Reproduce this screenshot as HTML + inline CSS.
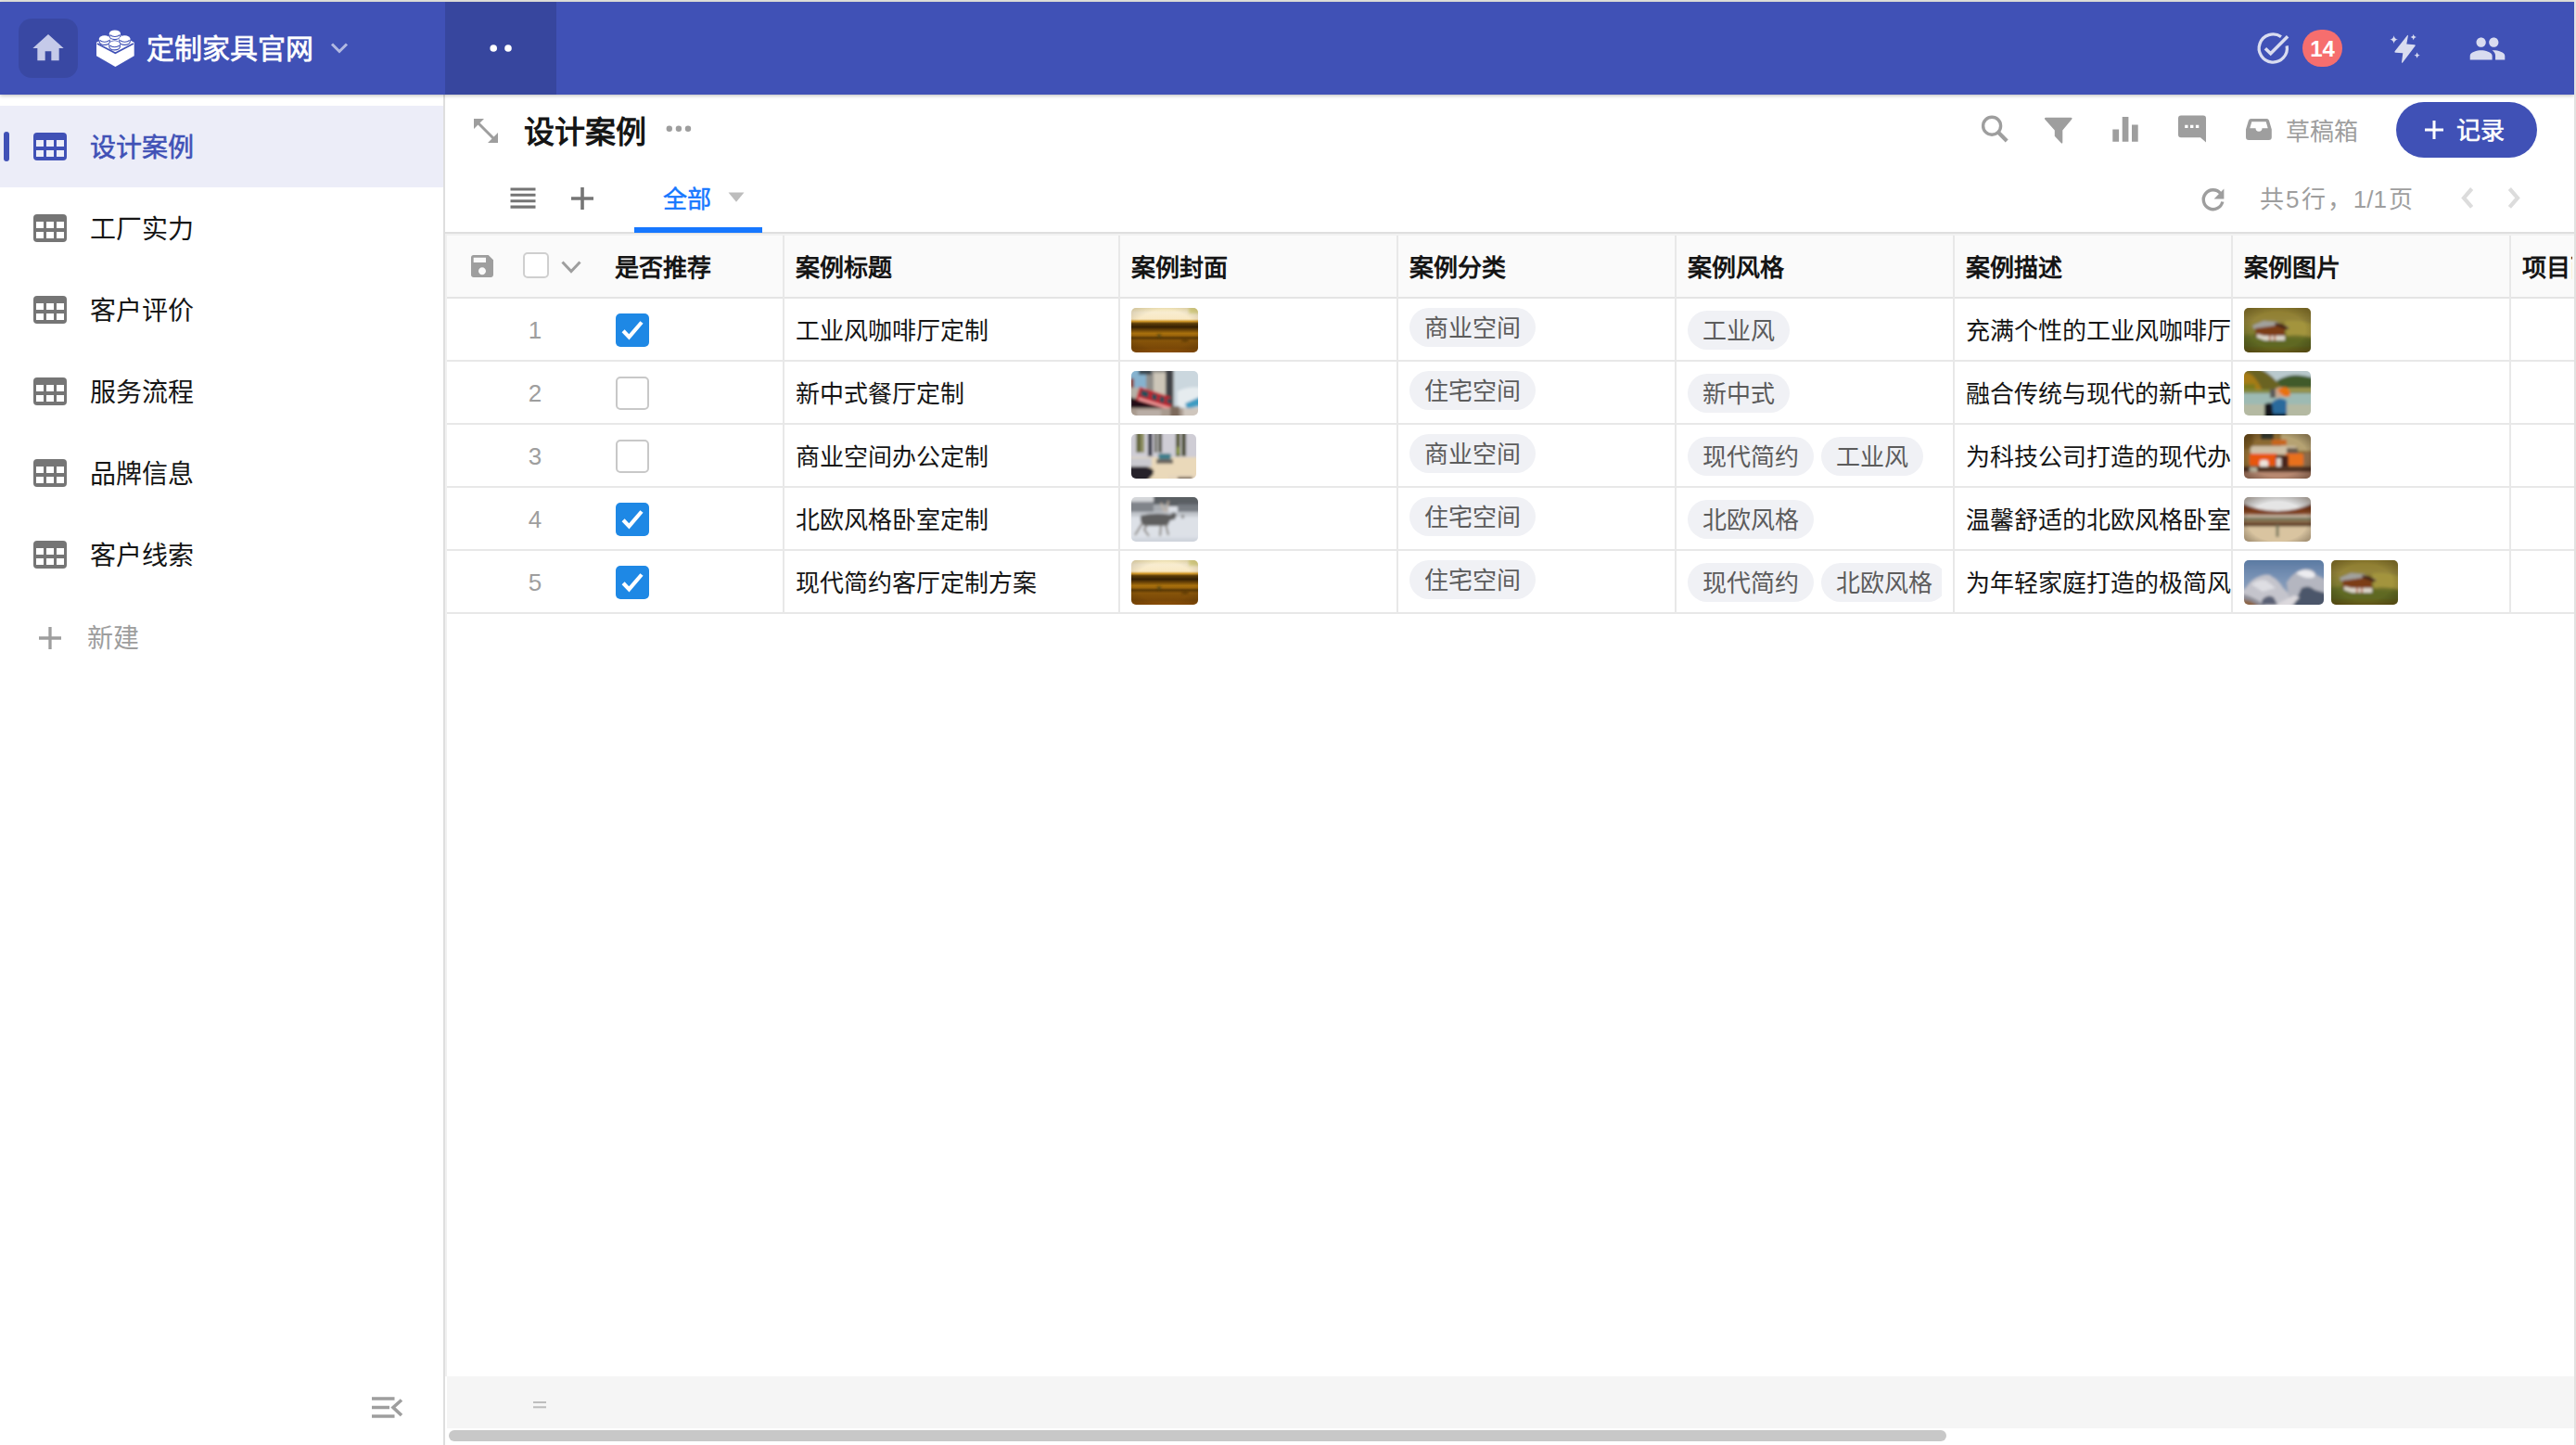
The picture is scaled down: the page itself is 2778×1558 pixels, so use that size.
<!DOCTYPE html>
<html lang="zh-CN">
<head>
<meta charset="utf-8">
<title>定制家具官网 - 设计案例</title>
<style>
*{box-sizing:border-box;margin:0;padding:0}
html,body{width:2778px;height:1558px;overflow:hidden;background:#fff}
body{font-family:"Liberation Sans",sans-serif;color:#151515;position:relative;font-size:26px;line-height:1}
.abs{position:absolute}
svg{position:absolute;display:block;overflow:visible}
.t{position:absolute;white-space:nowrap;line-height:40px;height:40px;text-align:justify;text-align-last:justify}
#hdr{left:0;top:2px;width:2776px;height:100px;background:#4051b6;box-shadow:0 1px 4px rgba(0,0,0,.28)}
#topstrip{left:0;top:0;width:2778px;height:2px;background:#e6e6e1}
#rightstrip{left:2776px;top:0;width:2px;height:1558px;background:#e2e2e0;z-index:5}
#homebtn{left:20px;top:18px;width:64px;height:64px;border-radius:14px;background:rgba(0,0,0,.1)}
#darkseg{left:480px;top:0;width:120px;height:100px;background:rgba(0,0,0,.13)}
#appname{left:158px;width:180px;top:31px;font-size:30px;font-weight:normal;-webkit-text-stroke:.7px #fff;color:#fff}
#badge{left:2483px;top:30px;width:43px;height:40px;border-radius:20px;background:#f66e6e;color:#fff;font-weight:bold;font-size:24px;text-align:center;line-height:41px}
#side{left:0;top:102px;width:480px;height:1456px;border-right:2px solid #dedede;background:#fff}
.sel{left:0;top:12px;width:478px;height:88px;background:#ecedf8}
.ind{left:4px;top:40px;width:6px;height:32px;border-radius:3px;background:#4051b6}
.nav{left:97px;width:112px;font-size:28px;color:#151515}
.nav.on{color:#4051b6;-webkit-text-stroke:.6px #4051b6}
#title{left:565px;width:132px;top:123px;font-size:33px;font-weight:bold;color:#151515}
.gray{color:#9e9e9e}
#btn{left:2584px;top:110px;width:152px;height:60px;border-radius:30px;background:#4051b6}
#btn .t{color:#fff;-webkit-text-stroke:.6px #fff;font-size:26px}
#tab{left:715px;width:52px;top:195px;font-size:26px;color:#1677ff;-webkit-text-stroke:.5px #1677ff}
#tabline{left:684px;top:245px;width:138px;height:6px;background:#1677ff;z-index:3}
#thead{left:480px;top:250px;width:2296px;height:72px;background:#fafafa;border-top:2px solid #dfdfdf;border-bottom:2px solid #e4e4e4;box-shadow:inset 0 2px 0 #f1f1f1}
.hl{left:482px;width:2294px;height:2px;background:#e8e8e8}
.vl{top:254px;width:2px;height:408px;background:#e8e8e8}
.th{top:269px;width:104px;font-weight:bold;font-size:26px;color:#151515}
.td{font-size:26px;color:#151515;overflow:hidden}
.num{width:60px;left:547px;text-align:center;text-align-last:center;color:#9e9e9e;font-size:26px}
.cb{left:664px;width:36px;height:36px;border-radius:5px;border:2px solid #c8c8c8;background:#fff}
.cb.on{border:0;background:#1e88e5}
.tag{height:42px;border-radius:21px;background:#f0f1f5;color:#5c5c5c;font-size:26px;line-height:44px;padding:0 16px;text-align:justify;text-align-last:justify;white-space:nowrap;overflow:hidden}
.thumb{height:48px;border-radius:5px;overflow:hidden}
.thumb svg{position:static;overflow:hidden}
#sum{left:482px;top:1484px;width:2294px;height:56px;background:#f5f5f5}
#sbar{left:484px;top:1542px;width:1615px;height:12px;border-radius:6px;background:#c8c8c8}
</style>
</head>
<body>
<div class="abs" id="topstrip"></div>
<div class="abs" id="rightstrip"></div>
<div class="abs" id="side">
<div class="abs sel"></div><div class="abs ind"></div>
<svg style="left:36px;top:41px" width="36" height="30" viewBox="0 0 36 30" ><rect width="36" height="30" rx="4" fill="#4051b6"/><rect x="3" y="8" width="8" height="7" fill="#ecedf8"/><rect x="3" y="19" width="8" height="7" fill="#ecedf8"/><rect x="14" y="8" width="8" height="7" fill="#ecedf8"/><rect x="14" y="19" width="8" height="7" fill="#ecedf8"/><rect x="25" y="8" width="8" height="7" fill="#ecedf8"/><rect x="25" y="19" width="8" height="7" fill="#ecedf8"/></svg>
<div class="t nav on" style="top:38px">设计案例</div>
<svg style="left:36px;top:129px" width="36" height="30" viewBox="0 0 36 30" ><rect width="36" height="30" rx="4" fill="#757575"/><rect x="3" y="8" width="8" height="7" fill="#fff"/><rect x="3" y="19" width="8" height="7" fill="#fff"/><rect x="14" y="8" width="8" height="7" fill="#fff"/><rect x="14" y="19" width="8" height="7" fill="#fff"/><rect x="25" y="8" width="8" height="7" fill="#fff"/><rect x="25" y="19" width="8" height="7" fill="#fff"/></svg>
<div class="t nav" style="top:126px">工厂实力</div>
<svg style="left:36px;top:217px" width="36" height="30" viewBox="0 0 36 30" ><rect width="36" height="30" rx="4" fill="#757575"/><rect x="3" y="8" width="8" height="7" fill="#fff"/><rect x="3" y="19" width="8" height="7" fill="#fff"/><rect x="14" y="8" width="8" height="7" fill="#fff"/><rect x="14" y="19" width="8" height="7" fill="#fff"/><rect x="25" y="8" width="8" height="7" fill="#fff"/><rect x="25" y="19" width="8" height="7" fill="#fff"/></svg>
<div class="t nav" style="top:214px">客户评价</div>
<svg style="left:36px;top:305px" width="36" height="30" viewBox="0 0 36 30" ><rect width="36" height="30" rx="4" fill="#757575"/><rect x="3" y="8" width="8" height="7" fill="#fff"/><rect x="3" y="19" width="8" height="7" fill="#fff"/><rect x="14" y="8" width="8" height="7" fill="#fff"/><rect x="14" y="19" width="8" height="7" fill="#fff"/><rect x="25" y="8" width="8" height="7" fill="#fff"/><rect x="25" y="19" width="8" height="7" fill="#fff"/></svg>
<div class="t nav" style="top:302px">服务流程</div>
<svg style="left:36px;top:393px" width="36" height="30" viewBox="0 0 36 30" ><rect width="36" height="30" rx="4" fill="#757575"/><rect x="3" y="8" width="8" height="7" fill="#fff"/><rect x="3" y="19" width="8" height="7" fill="#fff"/><rect x="14" y="8" width="8" height="7" fill="#fff"/><rect x="14" y="19" width="8" height="7" fill="#fff"/><rect x="25" y="8" width="8" height="7" fill="#fff"/><rect x="25" y="19" width="8" height="7" fill="#fff"/></svg>
<div class="t nav" style="top:390px">品牌信息</div>
<svg style="left:36px;top:481px" width="36" height="30" viewBox="0 0 36 30" ><rect width="36" height="30" rx="4" fill="#757575"/><rect x="3" y="8" width="8" height="7" fill="#fff"/><rect x="3" y="19" width="8" height="7" fill="#fff"/><rect x="14" y="8" width="8" height="7" fill="#fff"/><rect x="14" y="19" width="8" height="7" fill="#fff"/><rect x="25" y="8" width="8" height="7" fill="#fff"/><rect x="25" y="19" width="8" height="7" fill="#fff"/></svg>
<div class="t nav" style="top:478px">客户线索</div>
<svg style="left:42px;top:573.5px" width="24" height="24" viewBox="0 0 24 24" ><path d="M12 0v24M0 12h24" stroke="#9e9e9e" stroke-width="3.300" fill="none"/></svg>
<div class="t nav" style="top:567px;left:94px;width:56px;color:#9e9e9e">新建</div>
<svg style="left:401px;top:1404px" width="34" height="24" viewBox="0 0 34 24" ><path d="M0 2h24.5M0 11.5h19M0 21h24.5" stroke="#9e9e9e" stroke-width="3.4" fill="none"/><path d="M32 3.5l-9 8 9 8.5" stroke="#9e9e9e" stroke-width="3.6" fill="none"/></svg>
</div>
<div class="abs" id="hdr">
<div class="abs" id="homebtn"></div><div class="abs" id="darkseg"></div>
<svg style="left:32px;top:30px" width="40" height="40" viewBox="0 0 24 24" ><path d="M10 20v-6h4v6h5v-8h3L12 3 2 12h3v8z" fill="#c5cae9"/></svg>
<svg style="left:104px;top:30px" width="41" height="40" viewBox="0 0 41 40" >
<path d="M0 13.700L20.400 3 40.700 13.700V28.200L20.400 40 0 28.200z" fill="#fff"/>
<path d="M0.800 15L20.400 25.300 39.900 15" stroke="#4051b6" stroke-width="1.700" fill="none"/>
<g fill="#fff" stroke="#4051b6" stroke-width="1.200">
<path d="M14.200 4.300a5.700 3.400 0 0 1 11.400 0v2.900a5.700 3.400 0 0 1 -11.400 0z"/>
<path d="M3.100 10.100a5.700 3.400 0 0 1 11.400 0v2.900a5.700 3.400 0 0 1 -11.400 0z"/>
<path d="M24.800 10.100a5.700 3.400 0 0 1 11.400 0v2.900a5.700 3.400 0 0 1 -11.400 0z"/>
<path d="M13.900 15.600a5.700 3.400 0 0 1 11.400 0v2.900a5.700 3.400 0 0 1 -11.400 0z"/>
</g>
<g fill="#fff">
<ellipse cx="19.900" cy="4.300" rx="6.100" ry="3.800"/><ellipse cx="8.800" cy="10.100" rx="6.100" ry="3.800"/><ellipse cx="30.500" cy="10.100" rx="6.100" ry="3.800"/><ellipse cx="19.600" cy="15.600" rx="5.700" ry="3.400"/>
</g>
<g fill="none" stroke="#4051b6" stroke-width="1.100">
<path d="M14.800 5.600a5.700 3.400 0 0 0 10.200 0"/><path d="M3.700 11.400a5.700 3.400 0 0 0 10.200 0"/><path d="M25.400 11.400a5.700 3.400 0 0 0 10.200 0"/><path d="M14.500 16.900a5.700 3.400 0 0 0 10.200 0"/>
</g>
</svg>
<div class="t" id="appname">定制家具官网</div>
<svg style="left:356px;top:44px" width="20" height="12" viewBox="0 0 20 12" ><path d="M2 1.5l8 8 8-8" stroke="rgba(255,255,255,.6)" stroke-width="3" fill="none"/></svg>
<svg style="left:520px;top:40px" width="40" height="20" viewBox="0 0 40 20" ><circle cx="12.2" cy="10" r="3.8" fill="#fff"/><circle cx="28" cy="10" r="3.8" fill="#fff"/></svg>
<svg style="left:2430px;top:28px" width="44" height="44" viewBox="0 0 44 44" ><path d="M29.960 9.630A15.100 15.100 0 1 0 36.170 19.380" stroke="#d9dcf0" stroke-width="3.300" fill="none"/><path d="M12.9 22.2l5.8 5.6L37.1 9.2" stroke="#d9dcf0" stroke-width="3.5" fill="none"/></svg>
<div class="abs" id="badge">14</div>
<svg style="left:2577px;top:35px" width="34" height="32" viewBox="0 0 34 32" ><g fill="#d9dcf0">
<path d="M19 1.2L5.6 18.2q-.9 1.4.7 1.5l8 .6-1.3 9.6q0 1.6 1.2.4L27.6 12.6q.8-1.3-.7-1.4l-8.6-.6 1.6-8.8q.1-1.5-.9-.6z"/>
<path d="M4.6 1.2q.6 3.8 4.4 4.4-3.8.6-4.4 4.4Q4 6.200 .2 5.600 4 5 4.600 1.200z"/>
<path d="M25.700 0q.4 2.700 3.100 3.100-2.700.4-3.100 3.100-.4-2.700-3.100-3.100 2.700-.4 3.100-3.100z"/>
<path d="M29.600 19.500q.4 2.700 3.100 3.100-2.700.4-3.100 3.100-.4-2.700-3.100-3.100 2.700-.4 3.100-3.100z"/>
</g></svg>
<svg style="left:2661.5px;top:29.5px" width="41" height="41" viewBox="0 0 24 24" ><path d="M16 11c1.66 0 2.990-1.340 2.990-3S17.660 5 16 5c-1.660 0-3 1.340-3 3s1.340 3 3 3zm-8 0c1.660 0 2.990-1.340 2.990-3S9.660 5 8 5C6.340 5 5 6.340 5 8s1.340 3 3 3zm0 2c-2.330 0-7 1.170-7 3.500V19h14v-2.500c0-2.330-4.670-3.500-7-3.500zm8 0c-.290 0-.620.020-.970.050 1.160.840 1.970 1.970 1.970 3.450V19h6v-2.500c0-2.330-4.670-3.500-7-3.500z" fill="#d9dcf0"/></svg>
</div>
<svg style="left:511px;top:128px" width="26" height="26" viewBox="0 0 26 26" ><path d="M0 0h11L0 11zM26 26H15L26 15z" fill="#9e9e9e"/><path d="M4 4l18 18" stroke="#9e9e9e" stroke-width="3"/></svg>
<div class="t" id="title">设计案例</div>
<svg style="left:718px;top:135px" width="28" height="8" viewBox="0 0 28 8" ><circle cx="3.8" cy="3.8" r="3.2" fill="#9e9e9e"/><circle cx="13.900" cy="3.8" r="3.2" fill="#9e9e9e"/><circle cx="24" cy="3.8" r="3.2" fill="#9e9e9e"/></svg>
<svg style="left:2136px;top:124px" width="32" height="32" viewBox="0 0 32 32" ><circle cx="12.1" cy="11.7" r="9.5" stroke="#9e9e9e" stroke-width="3.4" fill="none"/><path d="M18.800 18.600l9.400 9.400" stroke="#9e9e9e" stroke-width="4.2"/></svg>
<svg style="left:2204px;top:126px" width="32" height="30" viewBox="0 0 32 30" ><path d="M2.300.7h26.900q2.200.2.900 2L20.300 14.600V27.600q-.1 1.800-1.500.7L11.800 20.800V14.600L1.300 2.700q-1.100-1.700 1-2z" fill="#9e9e9e"/></svg>
<svg style="left:2278px;top:126px" width="28" height="27" viewBox="0 0 28 27" ><path d="M.3 13.600h6.800v13.200H.3zM10.700 0h6.700v26.800h-6.700zM21 8.500h6.700v18.300H21z" fill="#9e9e9e"/></svg>
<svg style="left:2349px;top:124px" width="30" height="30" viewBox="0 0 30 30" ><path d="M3 .4h24q3 0 3 3V29.600l-6-5.400H3q-3 0-3-3V3.400q0-3 3-3z" fill="#9e9e9e"/><path d="M7.200 10.800h3.300v3.200H7.200zM13 10.800h3.400v3.200H13zM18.900 10.800h3.400v3.200h-3.400z" fill="#fff"/></svg>
<svg style="left:2422px;top:128px" width="28" height="23" viewBox="0 0 28 23" ><path d="M5.600 0h16.800q2 0 2.600 2l2.800 9.500v8.500q0 3-3 3H3q-3 0-3-3V11.500L2.900 2q.7-2 2.700-2z" fill="#9e9e9e"/><path d="M6.300 3.200h15.400l2 7h-6.200a3.500 3.500 0 0 1-7 0H4.300z" fill="#fff"/></svg>
<div class="t gray" style="left:2465px;top:122px;width:78px">草稿箱</div>
<div class="abs" id="btn">
<svg style="left:31px;top:20px" width="20" height="20" viewBox="0 0 20 20" ><path d="M10 0v20M0 10h20" stroke="#fff" stroke-width="3" fill="none"/></svg>
<div class="t" style="left:65px;top:11px;width:52px">记录</div></div>
<svg style="left:550px;top:202px" width="28" height="23" viewBox="0 0 28 23" ><path d="M.5 2h27M.5 8.300h27M.5 14.700h27M.5 21.100h27" stroke="#757575" stroke-width="3.1" fill="none"/></svg>
<svg style="left:616px;top:202px" width="24" height="24" viewBox="0 0 24 24" ><path d="M12 0v24M0 12h24" stroke="#757575" stroke-width="3.6" fill="none"/></svg>
<div class="t" id="tab">全部</div>
<svg style="left:785px;top:207px" width="18" height="11" viewBox="0 0 18 11" ><path d="M.5.500h17L9 10.800z" fill="#bdbdbd"/></svg>
<div class="abs" id="tabline"></div>
<svg style="left:2372px;top:201px" width="28" height="29" viewBox="0 0 28 29" ><path d="M22.600 7.500A10.400 10.400 0 1 0 24.800 16.500" stroke="#9e9e9e" stroke-width="3.4" fill="none"/><path d="M26.400 2.600v10.800H15.600z" fill="#9e9e9e"/></svg>
<div class="t gray" style="left:2437px;top:195px;width:165px">共5行，1/1页</div>
<svg style="left:2654px;top:202px" width="14" height="23" viewBox="0 0 14 23" ><path d="M11.600 1.500L3 11.400l8.600 9.900" stroke="#dcdcdc" stroke-width="4.200" fill="none"/></svg>
<svg style="left:2704px;top:202px" width="14" height="23" viewBox="0 0 14 23" ><path d="M2.400 1.500L11 11.400l-8.600 9.900" stroke="#dcdcdc" stroke-width="4.200" fill="none"/></svg>
<div class="abs" id="thead"></div>
<div class="abs" style="left:480px;top:252px;width:2px;height:1232px;background:#f0f0f0"></div>
<div class="abs hl" style="top:388px"></div>
<div class="abs hl" style="top:456px"></div>
<div class="abs hl" style="top:524px"></div>
<div class="abs hl" style="top:592px"></div>
<div class="abs hl" style="top:660px"></div>
<div class="abs vl" style="left:844px"></div>
<div class="abs vl" style="left:1206px"></div>
<div class="abs vl" style="left:1506px"></div>
<div class="abs vl" style="left:1806px"></div>
<div class="abs vl" style="left:2106px"></div>
<div class="abs vl" style="left:2406px"></div>
<div class="abs vl" style="left:2706px"></div>
<svg style="left:504px;top:271px" width="32" height="32" viewBox="0 0 24 24" ><path d="M17 3H5c-1.110 0-2 .9-2 2v14c0 1.100.890 2 2 2h14c1.100 0 2-.9 2-2V7l-4-4zm-5 16c-1.660 0-3-1.340-3-3s1.340-3 3-3 3 1.340 3 3-1.340 3-3 3zm3-10H5V5h10v4z" fill="#9e9e9e"/></svg>
<div class="abs" style="left:564px;top:272px;width:28px;height:28px;border:2px solid #cfcfcf;border-radius:5px;background:#fff"></div>
<svg style="left:605px;top:281px" width="22" height="14" viewBox="0 0 22 14" ><path d="M1.500 1.500l9.500 10 9.500-10" stroke="#9e9e9e" stroke-width="3" fill="none"/></svg>
<div class="t th" style="left:663px">是否推荐</div>
<div class="t th" style="left:858px">案例标题</div>
<div class="t th" style="left:1220px">案例封面</div>
<div class="t th" style="left:1520px">案例分类</div>
<div class="t th" style="left:1820px">案例风格</div>
<div class="t th" style="left:2120px">案例描述</div>
<div class="t th" style="left:2420px">案例图片</div>
<div class="abs" style="left:2720px;top:269px;width:54px;height:40px;overflow:hidden"><div class="t th" style="left:0;top:0">项目面积</div></div>
<div class="t num" style="top:336px">1</div>
<div class="abs cb on" style="top:338px"></div>
<svg style="left:664px;top:338px" width="36" height="36" viewBox="0 0 36 36" ><path d="M8.100 18.800l6.300 6.600L28 9.500" stroke="#fff" stroke-width="4.200" fill="none"/></svg>
<div class="t td" style="left:858px;top:337px;width:208px">工业风咖啡厅定制</div>
<div class="abs thumb" style="left:1220px;top:332px;width:72px"><svg width="72" height="48" viewBox="0 0 72 48"><defs><filter id="b1" x="-10%" y="-10%" width="120%" height="120%"><feGaussianBlur stdDeviation="1.400"/></filter></defs><defs><linearGradient id="gs1" x1="0" y1="0" x2="0" y2="1">
<stop offset="0" stop-color="#f2e4b4"/><stop offset=".1" stop-color="#f8ecd0"/><stop offset=".25" stop-color="#f9e9c4"/><stop offset=".3" stop-color="#d39a2c"/><stop offset=".35" stop-color="#5a3c08"/><stop offset=".43" stop-color="#352003"/><stop offset=".5" stop-color="#6e4607"/><stop offset=".57" stop-color="#a8700d"/><stop offset=".62" stop-color="#9a640b"/><stop offset=".67" stop-color="#5c3a05"/><stop offset=".74" stop-color="#86540a"/><stop offset=".9" stop-color="#7a4807"/><stop offset="1" stop-color="#8c4f06"/></linearGradient>
<radialGradient id="gsv1" cx=".5" cy=".5" r=".75"><stop offset=".6" stop-color="#000" stop-opacity="0"/><stop offset="1" stop-color="#2a1800" stop-opacity=".2"/></radialGradient></defs>
<rect width="72" height="48" fill="url(#gs1)"/><g filter="url(#b1)"><ellipse cx="30" cy="30" rx="1.8" ry="1.8" fill="#3a3a14"/><ellipse cx="58" cy="35" rx="4" ry="1" fill="#4a2e04"/><rect x="62" y="-2" width="14" height="8" fill="#e2da8c"/></g><rect width="72" height="48" fill="url(#gsv1)"/></svg></div>
<div class="abs tag" style="left:1520px;top:332px;width:136px">商业空间</div>
<div class="abs" style="left:1820px;top:335px;width:274px;height:42px;overflow:hidden">
<div class="abs tag" style="left:0px;top:0;width:110px">工业风</div>
</div>
<div class="abs" style="left:2120px;top:337px;width:286px;height:40px;overflow:hidden"><div class="t td" style="left:0;top:0;width:390px">充满个性的工业风咖啡厅空间定制</div></div>
<div class="abs thumb" style="left:2420px;top:332px;width:72px"><svg width="72" height="48" viewBox="0 0 72 48"><defs><filter id="b2" x="-10%" y="-10%" width="120%" height="120%"><feGaussianBlur stdDeviation="1.400"/></filter></defs><defs><linearGradient id="gh2" x1="0" y1="0" x2="0" y2="1"><stop offset="0" stop-color="#8c7a2a"/><stop offset=".3" stop-color="#94843a"/><stop offset=".55" stop-color="#7e7a30"/><stop offset=".72" stop-color="#5c6822"/><stop offset=".9" stop-color="#66601a"/><stop offset="1" stop-color="#74520e"/></linearGradient>
<radialGradient id="ghv2" cx=".5" cy=".5" r=".75"><stop offset=".55" stop-color="#000" stop-opacity="0"/><stop offset="1" stop-color="#2a1a00" stop-opacity=".38"/></radialGradient></defs>
<g filter="url(#b2)"><rect x="-4" y="-4" width="80" height="56" fill="url(#gh2)"/>
<path d="M44 14q16-2 32 4v14q-16-4-30-2z" fill="#a3943c"/><path d="M-4 30q30-4 50 2l30 2v8H-4z" fill="#5f6a24" opacity=".7"/>
<path d="M9 19l12-5 14 1 14 6-4 2-12-3-22 3z" fill="#a2a29e"/><path d="M33 16l8 1 8 5-5 2-10-4z" fill="#4a2814"/>
<path d="M12 22l22-3 10 4v8H13z" fill="#7c3d18"/><path d="M14 28l8 2h22v5H22l-8-3z" fill="#dcd6ca"/><path d="M27 30h2v5h-2zM32 30h2v5h-2z" fill="#b5603a"/></g><rect width="72" height="48" fill="url(#ghv2)"/></svg></div>
<div class="t num" style="top:404px">2</div>
<div class="abs cb" style="top:406px"></div>
<div class="t td" style="left:858px;top:405px;width:182px">新中式餐厅定制</div>
<div class="abs thumb" style="left:1220px;top:400px;width:72px"><svg width="72" height="48" viewBox="0 0 72 48"><defs><filter id="b3" x="-10%" y="-10%" width="120%" height="120%"><feGaussianBlur stdDeviation="1.400"/></filter></defs><g filter="url(#b3)"><rect x="-4" y="-4" width="80" height="56" fill="#cbd7de"/>
<rect x="-4" y="-4" width="24" height="22" fill="#86b2cf"/><rect x="-4" y="8" width="7" height="14" fill="#8a4a3a"/><rect x="-4" y="18" width="12" height="14" fill="#b5b0a6"/>
<rect x="16" y="-4" width="30" height="56" fill="#8f8e8a"/><rect x="24" y="2" width="13" height="28" fill="#cdc6b8"/><rect x="37" y="-4" width="8" height="46" fill="#3f4347"/>
<rect x="8" y="-2" width="14" height="6" fill="#3a4650"/>
<path d="M50 22q10-6 26-4v16l-14 6-12-2z" fill="#e6ecef"/><path d="M58 35l18-8v10l-16 4z" fill="#3d9cc2"/>
<path d="M-2 28l46 14v8H-2z" fill="#241012"/>
<path d="M9 17l33 11 2 15L5 31z" fill="#c41e29"/><path d="M11 20l8 2.700-1 6.500-8-2.700zM22.500 24l5.500 1.800-.6 6.500-5.500-1.800zM31 26.800l5 1.600-.6 6.500-5-1.600zM38.500 29.300l4 1.300 0 5.500-4-1.300z" fill="#1f4d58"/>
<path d="M8 28.500l35 11v2.800L7.500 31.300z" fill="#f0a0a0"/>
<rect x="-4" y="40" width="80" height="12" fill="#a89a8e"/><rect x="42" y="38" width="10" height="14" fill="#7d6a5c"/><rect x="56" y="40" width="20" height="12" fill="#cfc6bd"/><rect x="6" y="42" width="26" height="10" fill="#b9aea6"/></g></svg></div>
<div class="abs tag" style="left:1520px;top:400px;width:136px">住宅空间</div>
<div class="abs" style="left:1820px;top:403px;width:274px;height:42px;overflow:hidden">
<div class="abs tag" style="left:0px;top:0;width:110px">新中式</div>
</div>
<div class="abs" style="left:2120px;top:405px;width:286px;height:40px;overflow:hidden"><div class="t td" style="left:0;top:0;width:390px">融合传统与现代的新中式餐厅设计</div></div>
<div class="abs thumb" style="left:2420px;top:400px;width:72px"><svg width="72" height="48" viewBox="0 0 72 48"><defs><filter id="b4" x="-10%" y="-10%" width="120%" height="120%"><feGaussianBlur stdDeviation="1.400"/></filter></defs><g filter="url(#b4)"><rect x="-4" y="-4" width="80" height="56" fill="#9dbab3"/>
<rect x="-4" y="-4" width="80" height="14" fill="#b9c9cd"/>
<path d="M36 10q16-10 40-2v14H36z" fill="#3f5a2c"/><path d="M-4 -4h18q18 8 28 24H-4z" fill="#6a6320"/><path d="M-4 2q10-2 16 6t8 14H-4z" fill="#a67c12"/><path d="M-4 14h16v8H-4z" fill="#7d7a1e"/>
<rect x="-4" y="20" width="80" height="4" fill="#848a40"/><rect x="44" y="18" width="32" height="4" fill="#9a9450"/>
<rect x="-4" y="36" width="80" height="16" fill="#b4b9a2"/>
<path d="M33 20q4-4 10-2l1 9-9 2z" fill="#c9a68c"/><path d="M36 20l8-3q6 2 6 10l-6 1-6-5z" fill="#e8720c"/><rect x="28" y="20" width="6" height="9" fill="#5a5a58"/>
<path d="M30 34q8-8 16-2v20H28z" fill="#2a6a9c"/><path d="M22 36q5-3 8-1l2 17H22z" fill="#15181c"/><rect x="22" y="46" width="24" height="6" fill="#111417"/></g></svg></div>
<div class="t num" style="top:472px">3</div>
<div class="abs cb" style="top:474px"></div>
<div class="t td" style="left:858px;top:473px;width:208px">商业空间办公定制</div>
<div class="abs thumb" style="left:1220px;top:468px;width:70px"><svg width="70" height="48" viewBox="0 0 70 48"><defs><filter id="b5" x="-10%" y="-10%" width="120%" height="120%"><feGaussianBlur stdDeviation="1.400"/></filter></defs><g filter="url(#b5)"><rect x="-4" y="-4" width="78" height="56" fill="#cfcdd5"/>
<rect x="5.500" y="-4" width="5" height="24" fill="#5d5f2a"/><rect x="11" y="-4" width="3" height="24" fill="#8a8c50"/>
<rect x="18" y="-4" width="4.500" height="28" fill="#24263a"/><rect x="25" y="-4" width="2.500" height="24" fill="#4a4c2e"/><rect x="29.500" y="-4" width="3.500" height="24" fill="#3a3c22"/>
<rect x="48" y="-4" width="4.500" height="28" fill="#4c4e1c"/><rect x="54.500" y="-4" width="4.500" height="28" fill="#3a3c18"/><rect x="49" y="14" width="3" height="8" fill="#8a9a2a"/>
<rect x="-4" y="25" width="78" height="27" fill="#ead9ba"/><rect x="-4" y="26" width="26" height="9" fill="#cacad0"/>
<path d="M-4 35h20q10 2 8 8l-8 9H-4z" fill="#27232a"/>
<rect x="27" y="27" width="18" height="5" fill="#6a6660"/><rect x="29" y="21" width="14" height="6" rx="2" fill="#3f7f8c"/>
<rect x="40" y="44" width="34" height="8" fill="#e6d6bc"/><rect x="50" y="46.500" width="16" height="3" fill="#5a4a40"/></g></svg></div>
<div class="abs tag" style="left:1520px;top:468px;width:136px">商业空间</div>
<div class="abs" style="left:1820px;top:471px;width:274px;height:42px;overflow:hidden">
<div class="abs tag" style="left:0px;top:0;width:136px">现代简约</div>
<div class="abs tag" style="left:144px;top:0;width:110px">工业风</div>
</div>
<div class="abs" style="left:2120px;top:473px;width:286px;height:40px;overflow:hidden"><div class="t td" style="left:0;top:0;width:364px">为科技公司打造的现代办公空间</div></div>
<div class="abs thumb" style="left:2420px;top:468px;width:72px"><svg width="72" height="48" viewBox="0 0 72 48"><defs><filter id="b6" x="-10%" y="-10%" width="120%" height="120%"><feGaussianBlur stdDeviation="1.400"/></filter></defs><defs><radialGradient id="gvv6" cx=".5" cy=".5" r=".75"><stop offset=".6" stop-color="#000" stop-opacity="0"/><stop offset="1" stop-color="#2a1200" stop-opacity=".5"/></radialGradient></defs>
<g filter="url(#b6)"><rect x="-4" y="-4" width="80" height="56" fill="#8c6b30"/>
<rect x="40" y="-4" width="36" height="22" fill="#b5a272"/><rect x="18" y="-4" width="14" height="10" fill="#33352a"/><rect x="-4" y="-4" width="14" height="20" fill="#7a5a22"/>
<rect x="30" y="6" width="16" height="6" fill="#c8661e"/>
<rect x="7" y="13" width="50" height="9" rx="3" fill="#cfc0a6"/><rect x="46" y="15" width="12" height="6" fill="#6a5a48"/>
<rect x="6" y="21" width="30" height="13" rx="2" fill="#e8540c"/><rect x="44" y="21" width="20" height="13" rx="2" fill="#e8701c"/>
<rect x="64" y="20" width="12" height="18" fill="#8c6a48"/>
<rect x="34" y="23" width="14" height="18" fill="#48281a"/><rect x="17" y="28" width="9" height="8" rx="2" fill="#ece4dc"/><rect x="35" y="26" width="5" height="12" fill="#e0d4cc"/>
<rect x="-4" y="35" width="80" height="8" fill="#4f3222"/><rect x="6" y="36" width="8" height="5" fill="#b8b09a"/>
<rect x="-4" y="41" width="80" height="11" fill="#b98a72"/></g><rect width="72" height="48" fill="url(#gvv6)"/></svg></div>
<div class="t num" style="top:540px">4</div>
<div class="abs cb on" style="top:542px"></div>
<svg style="left:664px;top:542px" width="36" height="36" viewBox="0 0 36 36" ><path d="M8.100 18.800l6.300 6.600L28 9.500" stroke="#fff" stroke-width="4.200" fill="none"/></svg>
<div class="t td" style="left:858px;top:541px;width:208px">北欧风格卧室定制</div>
<div class="abs thumb" style="left:1220px;top:536px;width:72px"><svg width="72" height="48" viewBox="0 0 72 48"><defs><filter id="b7" x="-10%" y="-10%" width="120%" height="120%"><feGaussianBlur stdDeviation="1.400"/></filter></defs><g filter="url(#b7)"><rect x="-4" y="-4" width="80" height="56" fill="#dde1e7"/>
<rect x="-4" y="-4" width="30" height="10" fill="#d5d7da"/><rect x="-4" y="5" width="28" height="12" fill="#80848a"/>
<rect x="24" y="-4" width="52" height="14" fill="#5a5e63"/><rect x="24" y="8" width="16" height="8" fill="#a9adb2"/><rect x="50" y="8" width="26" height="10" fill="#777c82"/>
<rect x="-4" y="16" width="80" height="5" fill="#c3c7cd"/>
<path d="M32 6l4 10M40 4l-2 12" stroke="#c9b9a8" stroke-width="1.500" fill="none"/>
<path d="M10 20q16-4 32-1l4-3 3 3-2 5-5 1-3 6H14q-5-3-4-11z" fill="#5e5e5e"/>
<path d="M12 28l-8 13M17 30l-3 5 5 7M32 30l-1 12M37 29l3 12" stroke="#85807c" stroke-width="2" fill="none"/>
<rect x="54" y="19" width="3" height="4" fill="#8a8a8a"/><rect x="-4" y="44" width="80" height="8" fill="#cfd4dd"/></g></svg></div>
<div class="abs tag" style="left:1520px;top:536px;width:136px">住宅空间</div>
<div class="abs" style="left:1820px;top:539px;width:274px;height:42px;overflow:hidden">
<div class="abs tag" style="left:0px;top:0;width:136px">北欧风格</div>
</div>
<div class="abs" style="left:2120px;top:541px;width:286px;height:40px;overflow:hidden"><div class="t td" style="left:0;top:0;width:390px">温馨舒适的北欧风格卧室全屋定制</div></div>
<div class="abs thumb" style="left:2420px;top:536px;width:72px"><svg width="72" height="48" viewBox="0 0 72 48"><defs><filter id="b8" x="-10%" y="-10%" width="120%" height="120%"><feGaussianBlur stdDeviation="1.400"/></filter></defs><defs><radialGradient id="gtv8" cx=".5" cy=".55" r=".8"><stop offset=".55" stop-color="#000" stop-opacity="0"/><stop offset="1" stop-color="#3a1c00" stop-opacity=".55"/></radialGradient></defs>
<g filter="url(#b8)"><rect x="-4" y="-4" width="80" height="56" fill="#d9c4a0"/>
<path d="M-4 -4h80v12q-40 16-80 0z" fill="#e5e5e5"/><path d="M-4 6q40 18 80 0v12q-40 8-80 0z" fill="#7c3c1c"/>
<path d="M-4 15q40 10 80 0v6H-4z" fill="#9a5e36"/>
<rect x="-4" y="19" width="80" height="3" fill="#c0ad9a"/><rect x="-4" y="22" width="80" height="3" fill="#74785a"/><rect x="-4" y="25" width="80" height="3" fill="#8a6a4c"/><rect x="-4" y="28" width="80" height="3.500" fill="#5a3a22"/>
<rect x="34.500" y="30" width="3" height="13" fill="#7c7a60"/></g><rect width="72" height="48" fill="url(#gtv8)"/></svg></div>
<div class="t num" style="top:608px">5</div>
<div class="abs cb on" style="top:610px"></div>
<svg style="left:664px;top:610px" width="36" height="36" viewBox="0 0 36 36" ><path d="M8.100 18.800l6.300 6.600L28 9.500" stroke="#fff" stroke-width="4.200" fill="none"/></svg>
<div class="t td" style="left:858px;top:609px;width:260px">现代简约客厅定制方案</div>
<div class="abs thumb" style="left:1220px;top:604px;width:72px"><svg width="72" height="48" viewBox="0 0 72 48"><defs><filter id="b9" x="-10%" y="-10%" width="120%" height="120%"><feGaussianBlur stdDeviation="1.400"/></filter></defs><defs><linearGradient id="gs9" x1="0" y1="0" x2="0" y2="1">
<stop offset="0" stop-color="#f2e4b4"/><stop offset=".1" stop-color="#f8ecd0"/><stop offset=".25" stop-color="#f9e9c4"/><stop offset=".3" stop-color="#d39a2c"/><stop offset=".35" stop-color="#5a3c08"/><stop offset=".43" stop-color="#352003"/><stop offset=".5" stop-color="#6e4607"/><stop offset=".57" stop-color="#a8700d"/><stop offset=".62" stop-color="#9a640b"/><stop offset=".67" stop-color="#5c3a05"/><stop offset=".74" stop-color="#86540a"/><stop offset=".9" stop-color="#7a4807"/><stop offset="1" stop-color="#8c4f06"/></linearGradient>
<radialGradient id="gsv9" cx=".5" cy=".5" r=".75"><stop offset=".6" stop-color="#000" stop-opacity="0"/><stop offset="1" stop-color="#2a1800" stop-opacity=".2"/></radialGradient></defs>
<rect width="72" height="48" fill="url(#gs9)"/><g filter="url(#b9)"><ellipse cx="30" cy="30" rx="1.8" ry="1.8" fill="#3a3a14"/><ellipse cx="58" cy="35" rx="4" ry="1" fill="#4a2e04"/><rect x="62" y="-2" width="14" height="8" fill="#e2da8c"/></g><rect width="72" height="48" fill="url(#gsv9)"/></svg></div>
<div class="abs tag" style="left:1520px;top:604px;width:136px">住宅空间</div>
<div class="abs" style="left:1820px;top:607px;width:274px;height:42px;overflow:hidden">
<div class="abs tag" style="left:0px;top:0;width:136px">现代简约</div>
<div class="abs tag" style="left:144px;top:0;width:136px">北欧风格</div>
</div>
<div class="abs" style="left:2120px;top:609px;width:286px;height:40px;overflow:hidden"><div class="t td" style="left:0;top:0;width:364px">为年轻家庭打造的极简风格客厅</div></div>
<div class="abs thumb" style="left:2420px;top:604px;width:86px"><svg width="86" height="48" viewBox="0 0 86 48"><defs><filter id="b10" x="-10%" y="-10%" width="120%" height="120%"><feGaussianBlur stdDeviation="1.400"/></filter></defs><defs><linearGradient id="gm10" x1="0" y1="0" x2="0" y2="1"><stop offset="0" stop-color="#55759f"/><stop offset=".45" stop-color="#7c95b7"/><stop offset="1" stop-color="#a3abb8"/></linearGradient></defs>
<g filter="url(#b10)"><rect x="-4" y="-4" width="94" height="56" fill="url(#gm10)"/>
<path d="M2 30q6-10 16-13t12 1q6 2 12 12l20 20H-4V34z" fill="#c4c4cc"/>
<path d="M46 24q8-12 18-14t14 6l12 6v30H50z" fill="#b4b6c0"/><path d="M56 14q6-5 14-3t6 7q-8 4-20-4z" fill="#ececf0"/>
<path d="M8 26q8-6 16-4l10 8-14 4z" fill="#dedee3"/>
<path d="M62 30q8-4 14 2l14 4v16H52z" fill="#4c566a"/><path d="M20 42q6-6 12-2l4 8H18z" fill="#5a6074"/>
<path d="M-4 36q10 2 20 8l10 8H-4z" fill="#8e8e98"/>
<path d="M30 52q10-8 24-14l6 2-12 12z" fill="#dcd9dd"/><path d="M-4 42q10 0 18 6l6 6H-4z" fill="#8c6648"/></g></svg></div>
<div class="abs thumb" style="left:2514px;top:604px;width:72px"><svg width="72" height="48" viewBox="0 0 72 48"><defs><filter id="b11" x="-10%" y="-10%" width="120%" height="120%"><feGaussianBlur stdDeviation="1.400"/></filter></defs><defs><linearGradient id="gh11" x1="0" y1="0" x2="0" y2="1"><stop offset="0" stop-color="#8c7a2a"/><stop offset=".3" stop-color="#94843a"/><stop offset=".55" stop-color="#7e7a30"/><stop offset=".72" stop-color="#5c6822"/><stop offset=".9" stop-color="#66601a"/><stop offset="1" stop-color="#74520e"/></linearGradient>
<radialGradient id="ghv11" cx=".5" cy=".5" r=".75"><stop offset=".55" stop-color="#000" stop-opacity="0"/><stop offset="1" stop-color="#2a1a00" stop-opacity=".38"/></radialGradient></defs>
<g filter="url(#b11)"><rect x="-4" y="-4" width="80" height="56" fill="url(#gh11)"/>
<path d="M44 14q16-2 32 4v14q-16-4-30-2z" fill="#a3943c"/><path d="M-4 30q30-4 50 2l30 2v8H-4z" fill="#5f6a24" opacity=".7"/>
<path d="M9 19l12-5 14 1 14 6-4 2-12-3-22 3z" fill="#a2a29e"/><path d="M33 16l8 1 8 5-5 2-10-4z" fill="#4a2814"/>
<path d="M12 22l22-3 10 4v8H13z" fill="#7c3d18"/><path d="M14 28l8 2h22v5H22l-8-3z" fill="#dcd6ca"/><path d="M27 30h2v5h-2zM32 30h2v5h-2z" fill="#b5603a"/></g><rect width="72" height="48" fill="url(#ghv11)"/></svg></div>
<div class="abs" id="sum"></div>
<svg style="left:575px;top:1511px" width="14" height="8" viewBox="0 0 14 8" ><path d="M0 1h14M0 6.300h14" stroke="#bdbdbd" stroke-width="2" fill="none"/></svg>
<div class="abs" id="sbar"></div>
</body>
</html>
